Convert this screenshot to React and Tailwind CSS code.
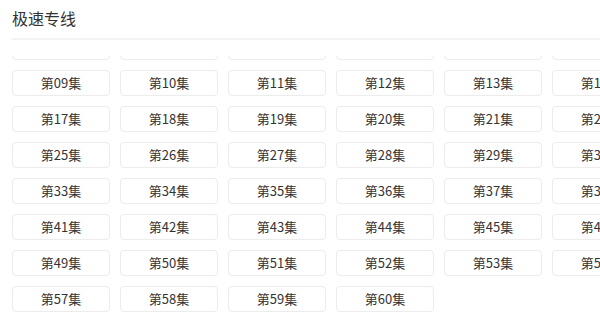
import React from 'react';

const episodes = Array.from({ length: 60 }, (_, i) => `第${String(i + 1).padStart(2, '0')}集`);

const App = () => {
  return (
    <div className="w-[600px] h-[319px] overflow-hidden bg-white font-['Noto_Sans_CJK_SC','Noto_Sans',sans-serif]">
      {/* Title */}
      <div className="pl-3 h-[38px] flex items-center">
        <h2 className="text-[16px] leading-none text-[#333] -mt-[3px]">极速专线</h2>
      </div>
      <div className="ml-3 h-[2px] bg-[#f3f3f3]" />

      {/* Episode list, scrolled */}
      <div className="mt-4 h-[263px] overflow-hidden">
        <div className="-mt-[22px] pl-3 grid grid-cols-[repeat(8,98px)] gap-x-[10px] gap-y-[10px]">
          {episodes.map((ep) => (
            <button
              key={ep}
              className="h-[26px] rounded-[4px] border border-[#ececec] bg-white text-[13px] text-[#333] flex items-center justify-center"
            >
              {ep}
            </button>
          ))}
        </div>
      </div>
    </div>
  );
};

export default App;
